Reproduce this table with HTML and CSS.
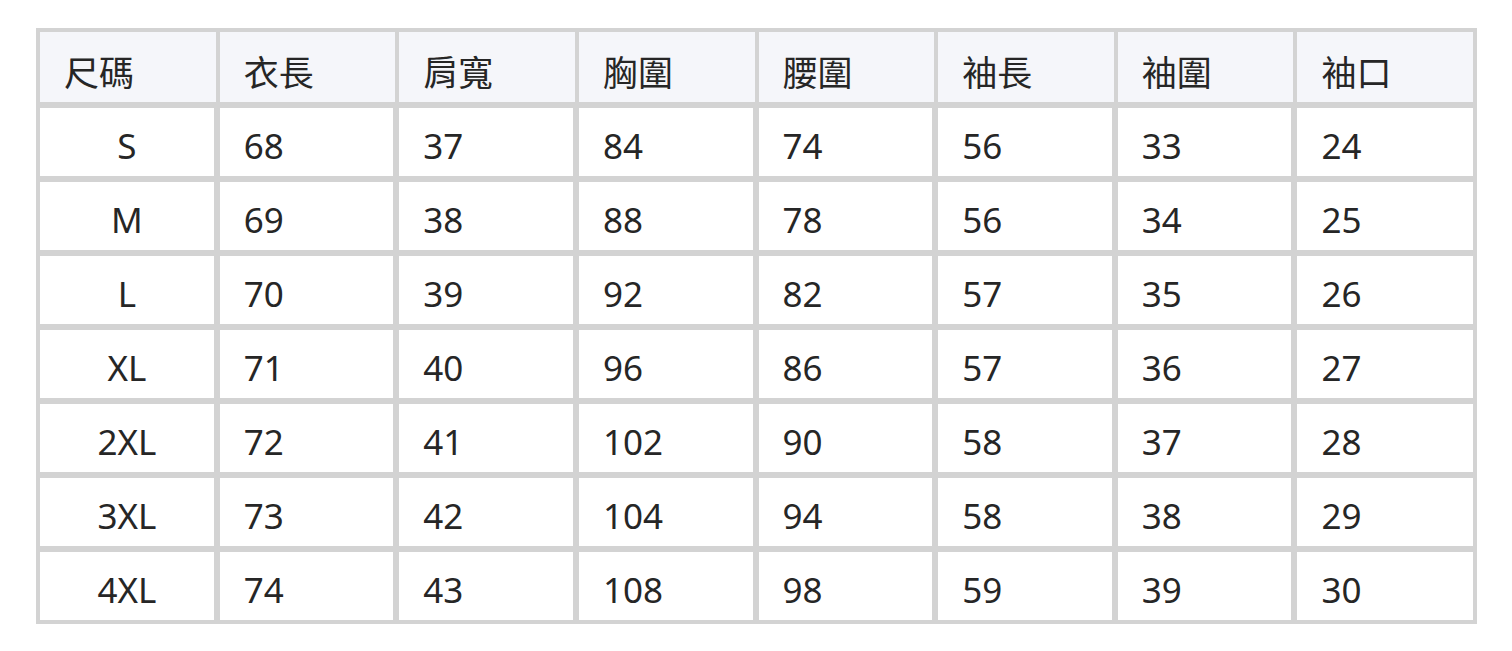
FILE: index.html
```html
<!DOCTYPE html>
<html lang="zh-Hant">
<head>
<meta charset="utf-8">
<title>尺碼表</title>
<link rel="stylesheet" href="styles.css">
</head>
<body>
<div class="size-table" role="table">
  <div class="cell head">尺碼</div><div class="cell head">衣長</div><div class="cell head">肩寬</div><div class="cell head">胸圍</div><div class="cell head">腰圍</div><div class="cell head">袖長</div><div class="cell head">袖圍</div><div class="cell head">袖口</div>

  <div class="cell size">S</div><div class="cell">68</div><div class="cell">37</div><div class="cell">84</div><div class="cell">74</div><div class="cell">56</div><div class="cell">33</div><div class="cell last">24</div>
  <div class="cell size">M</div><div class="cell">69</div><div class="cell">38</div><div class="cell">88</div><div class="cell">78</div><div class="cell">56</div><div class="cell">34</div><div class="cell last">25</div>
  <div class="cell size">L</div><div class="cell">70</div><div class="cell">39</div><div class="cell">92</div><div class="cell">82</div><div class="cell">57</div><div class="cell">35</div><div class="cell last">26</div>
  <div class="cell size">XL</div><div class="cell">71</div><div class="cell">40</div><div class="cell">96</div><div class="cell">86</div><div class="cell">57</div><div class="cell">36</div><div class="cell last">27</div>
  <div class="cell size">2XL</div><div class="cell">72</div><div class="cell">41</div><div class="cell">102</div><div class="cell">90</div><div class="cell">58</div><div class="cell">37</div><div class="cell last">28</div>
  <div class="cell size">3XL</div><div class="cell">73</div><div class="cell">42</div><div class="cell">104</div><div class="cell">94</div><div class="cell">58</div><div class="cell">38</div><div class="cell last">29</div>
  <div class="cell size">4XL</div><div class="cell">74</div><div class="cell">43</div><div class="cell">108</div><div class="cell">98</div><div class="cell">59</div><div class="cell">39</div><div class="cell last">30</div>
</div>
</body>
</html>
```

FILE: styles.css
```css
html, body {
  margin: 0;
  padding: 0;
  background: #ffffff;
}

body {
  padding: 28px 0 0 36px;
  font-family: "Noto Sans", "Noto Sans CJK TC", sans-serif;
  color: #262626;
}

.size-table {
  width: 1441px;
  box-sizing: border-box;
  display: grid;
  grid-template-columns: repeat(8, 1fr);
  grid-template-rows: 70px repeat(7, 68px);
  column-gap: 4px;
  row-gap: 6px;
  padding: 4px;
  background: #d3d3d3;
}

.cell {
  box-sizing: border-box;
  background: #ffffff;
  font-size: 35px;
  line-height: 46px;
  padding: 15px 24px 0 24px;
  border-right: 2px solid #d3d3d3;
  white-space: nowrap;
}

.cell.last,
.cell.head {
  border-right: none;
}

.cell.head {
  background: #f5f6fa;
  padding-top: 18px;
}

.cell.size {
  text-align: center;
  padding-left: 0;
  padding-right: 0;
}
```
